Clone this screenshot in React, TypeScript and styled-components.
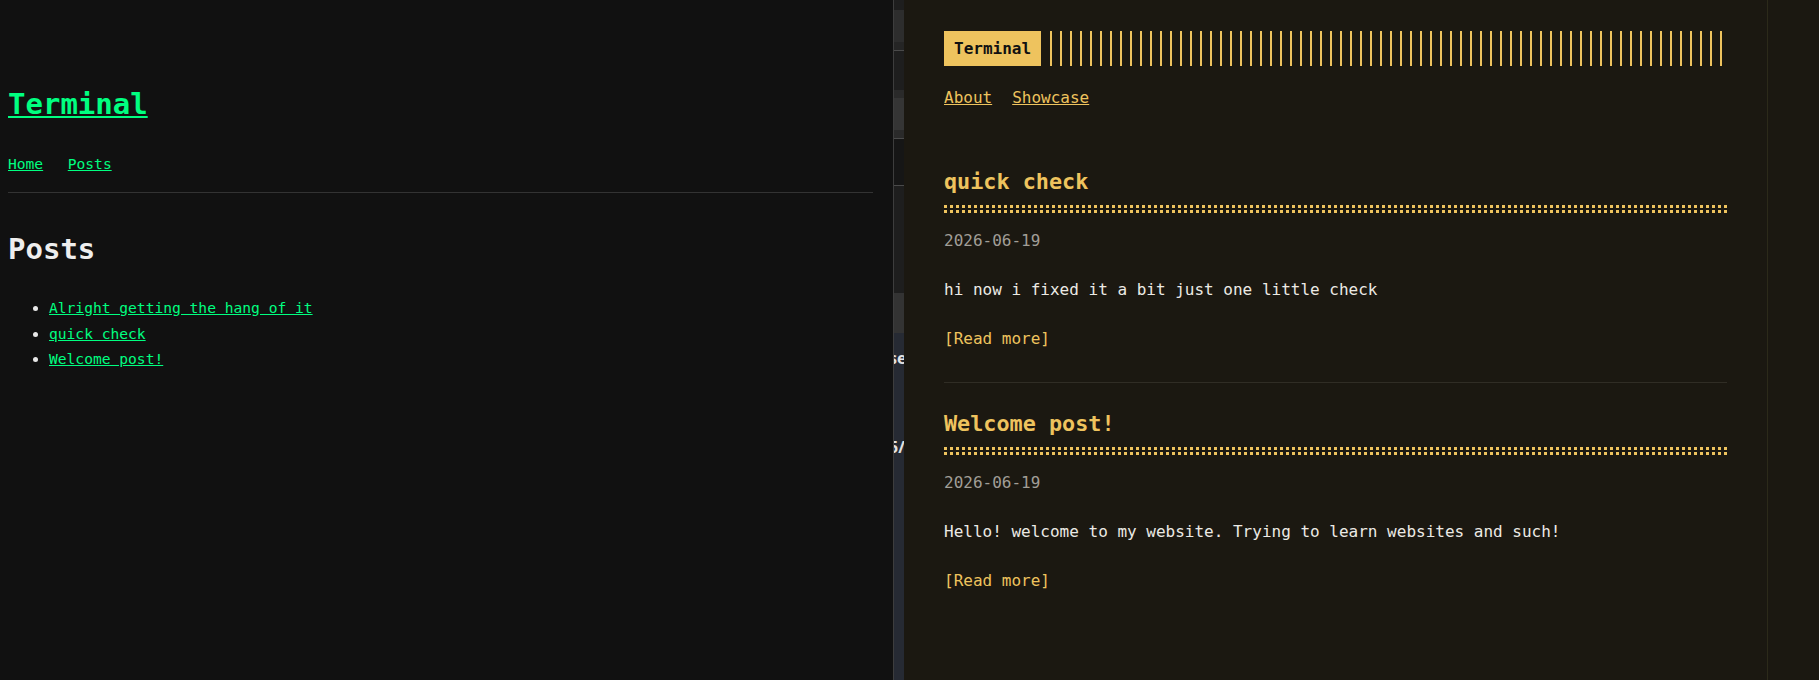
import React from "react";
import styled, { createGlobalStyle } from "styled-components";

const GlobalStyle = createGlobalStyle`
  html, body {
    margin: 0;
    padding: 0;
    background: #111111;
    overflow: hidden;
  }
  #root {
    height: 680px;
  }
`;

const MONO = `"DejaVu Sans Mono", "Liberation Mono", monospace`;
const GREEN = "#00ff80";
const AMBER = "#eec35e";

const Screen = styled.div`
  display: flex;
  width: 1819px;
  height: 680px;
  overflow: hidden;
`;

/* ---------- left window: plain green blog ---------- */

const GreenPage = styled.div`
  flex: 0 0 894px;
  box-sizing: border-box;
  border-right: 1px solid #3d3d3d;
  background: #111111;
  padding: 84px 20px 0 8px;
  display: flex;
  flex-direction: column;
  font-family: ${MONO};
  color: #e8e8e8;
`;

const SiteTitle = styled.h1`
  margin: 0;
  font-size: 29px;
  line-height: 40px;
  font-weight: 700;
`;

const TitleLink = styled.a`
  color: ${GREEN};
  text-decoration: underline;
  text-decoration-thickness: 2px;
  text-underline-offset: 2px;
`;

const GreenNav = styled.nav`
  display: flex;
  gap: 24.6px;
  margin-top: 30px;
  font-size: 14.6px;
  line-height: 20px;
`;

const GreenLink = styled.a`
  color: ${GREEN};
  text-decoration: underline;
  text-underline-offset: 1px;
`;

const Rule = styled.div`
  margin-top: 18px;
  height: 1px;
  background: #333333;
`;

const SectionTitle = styled.h2`
  margin: 36px 0 0;
  font-size: 29px;
  line-height: 40px;
  font-weight: 700;
  color: #eeeeee;
`;

const PostIndex = styled.ul`
  margin: 26px 0 0;
  padding-left: 41px;
  font-size: 14.6px;
  line-height: 25.6px;
  list-style: disc;
`;

/* ---------- window edge peeking out between the two pages ---------- */

const Backdrop = styled.div`
  flex: 0 0 10px;
  display: flex;
  flex-direction: column;
  overflow: hidden;
  background: #262a33;
`;

const Pane = styled.div<{ $h: number; $bg: string; $edge?: boolean }>`
  flex: 0 0 ${(p) => p.$h}px;
  box-sizing: border-box;
  background: ${(p) => p.$bg};
  border-top: ${(p) => (p.$edge ? "1px solid #4a4a4a" : "none")};
`;

const CodeArea = styled.div`
  flex: 1;
  padding-top: 15px;
  background: #262a33;
`;

const CodeLine = styled.div<{ $gap?: number }>`
  margin-top: ${(p) => p.$gap ?? 0}px;
  margin-left: -5px;
  white-space: nowrap;
  font-family: "Noto Sans", sans-serif;
  font-weight: 700;
  font-size: 16px;
  line-height: 20px;
  color: #e2e2e2;
`;

/* ---------- right window: amber terminal theme ---------- */

const AmberPage = styled.div`
  flex: 1;
  background: #1b1811;
  font-family: ${MONO};
  font-size: 16px;
  color: #eceae5;
`;

const Container = styled.div`
  box-sizing: border-box;
  width: 864px;
  height: 100%;
  border-right: 1px solid #2c2a1a;
  padding: 31px 40px 0;
  display: flex;
  flex-direction: column;
`;

const Header = styled.header`
  display: flex;
  height: 35px;
`;

const Logo = styled.a`
  flex: 0 0 auto;
  background: ${AMBER};
  color: #111111;
  font-weight: 700;
  padding: 5px 10px;
  line-height: 25px;
  text-decoration: none;
`;

const LogoStripes = styled.div`
  flex: 1;
  margin-left: 9px;
  background: repeating-linear-gradient(
    90deg,
    ${AMBER} 0,
    ${AMBER} 2px,
    transparent 2px,
    transparent 10px
  );
`;

const Menu = styled.nav`
  display: flex;
  gap: 20px;
  margin-top: 19px;
  line-height: 25px;
`;

const MenuLink = styled.a`
  color: ${AMBER};
  text-decoration: underline;
`;

const Posts = styled.div`
  margin-top: 31px;
  display: flex;
  flex-direction: column;
`;

const Post = styled.article`
  padding: 20px 0;
  &:not(:last-child) {
    border-bottom: 1px solid #302d25;
  }
`;

const PostTitle = styled.h1`
  position: relative;
  margin: 0 0 15px;
  padding: 4px 0 11px;
  font-size: 21.8px;
  line-height: 34px;
  font-weight: 700;
  color: ${AMBER};
  border-bottom: 3px dotted ${AMBER};

  &::after {
    content: "";
    position: absolute;
    left: 0;
    bottom: 2px;
    width: 100%;
    border-bottom: 3px dotted ${AMBER};
  }
`;

const PostMeta = styled.div`
  line-height: 25px;
  color: #a19e97;
  margin-bottom: 24px;
`;

const PostBody = styled.p`
  margin: 0 0 24px;
  line-height: 25px;
`;

const ReadMore = styled.a`
  display: block;
  line-height: 25px;
  margin-bottom: 11px;
  color: ${AMBER};
  text-decoration: none;
`;

type Entry = { title: string; date: string; excerpt: string };

const entries: Entry[] = [
  {
    title: "quick check",
    date: "2026-06-19",
    excerpt: "hi now i fixed it a bit just one little check",
  },
  {
    title: "Welcome post!",
    date: "2026-06-19",
    excerpt: "Hello! welcome to my website. Trying to learn websites and such!",
  },
];

const indexTitles = ["Alright getting the hang of it", "quick check", "Welcome post!"];

const panes: { h: number; bg: string; edge?: boolean }[] = [
  { h: 10, bg: "#1e1e1e" },
  { h: 32, bg: "#2d2d2d" },
  { h: 8, bg: "#252525" },
  { h: 40, bg: "#1e1e1e", edge: true },
  { h: 8, bg: "#2a2a2a" },
  { h: 32, bg: "#353535" },
  { h: 8, bg: "#2a2a2a" },
  { h: 47, bg: "#161616", edge: true },
  { h: 108, bg: "#1e1e1e", edge: true },
  { h: 40, bg: "#333333" },
];

export default function App() {
  return (
    <>
      <GlobalStyle />
      <Screen>
        <GreenPage>
          <SiteTitle>
            <TitleLink href="#">Terminal</TitleLink>
          </SiteTitle>
          <GreenNav>
            <GreenLink href="#">Home</GreenLink>
            <GreenLink href="#">Posts</GreenLink>
          </GreenNav>
          <Rule />
          <SectionTitle>Posts</SectionTitle>
          <PostIndex>
            {indexTitles.map((t) => (
              <li key={t}>
                <GreenLink href="#">{t}</GreenLink>
              </li>
            ))}
          </PostIndex>
        </GreenPage>

        <Backdrop>
          {panes.map((p, i) => (
            <Pane key={i} $h={p.h} $bg={p.bg} $edge={p.edge} />
          ))}
          <CodeArea>
            <CodeLine>se</CodeLine>
            <CodeLine $gap={69}>5/</CodeLine>
          </CodeArea>
        </Backdrop>

        <AmberPage>
          <Container>
            <Header>
              <Logo href="#">Terminal</Logo>
              <LogoStripes />
            </Header>
            <Menu>
              <MenuLink href="#">About</MenuLink>
              <MenuLink href="#">Showcase</MenuLink>
            </Menu>
            <Posts>
              {entries.map((e) => (
                <Post key={e.title}>
                  <PostTitle>{e.title}</PostTitle>
                  <PostMeta>{e.date}</PostMeta>
                  <PostBody>{e.excerpt}</PostBody>
                  <ReadMore href="#">[Read more]</ReadMore>
                </Post>
              ))}
            </Posts>
          </Container>
        </AmberPage>
      </Screen>
    </>
  );
}
